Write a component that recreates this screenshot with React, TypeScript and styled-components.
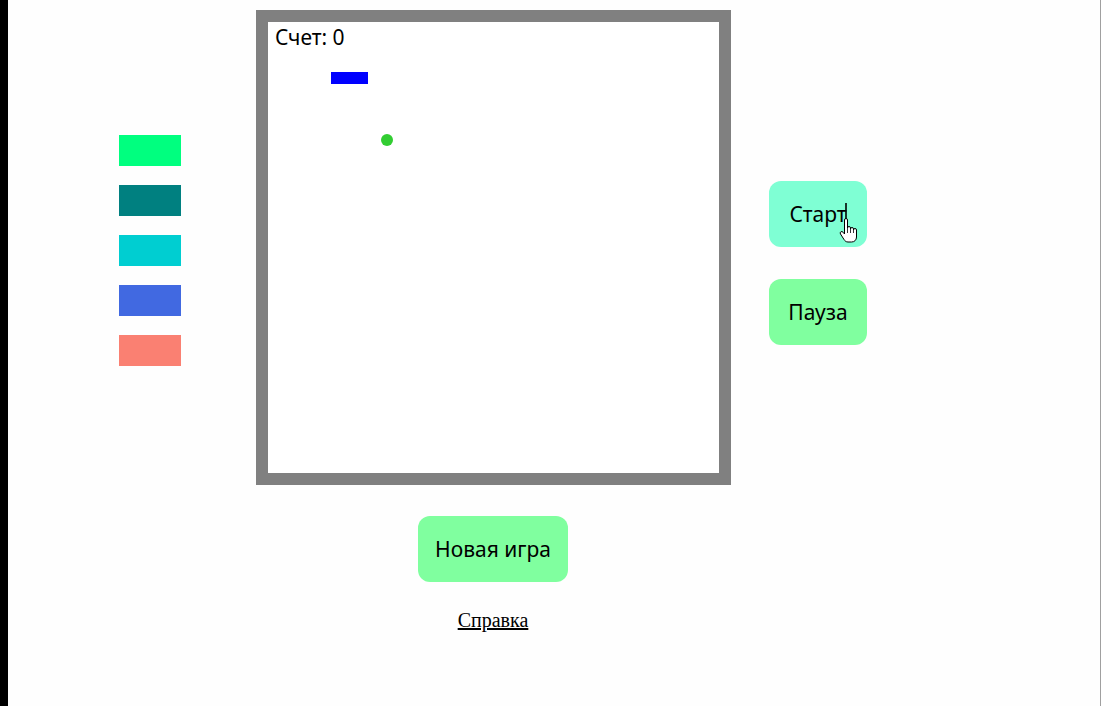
import React from "react";
import styled, { createGlobalStyle } from "styled-components";

const Global = createGlobalStyle`
  html, body { margin: 0; padding: 0; background: #fefefe; }
  body { font-family: "Liberation Serif", serif; }
`;

const Page = styled.div`
  box-sizing: border-box;
  width: 1101px;
  height: 706px;
  border-left: 8px solid #000;
  border-right: 1px solid #a0a0a0;
  background: #fefefe;
  overflow: hidden;
`;

const Main = styled.div`
  display: flex;
  flex-direction: column;
  padding: 10px 0 0 111px;
`;

const TopRow = styled.div`
  display: flex;
  align-items: flex-start;
`;

const Swatches = styled.div`
  display: flex;
  flex-direction: column;
  gap: 19px;
  padding-top: 125px;
  margin-right: 75px;
`;

const Swatch = styled.div<{ $color: string }>`
  width: 62px;
  height: 31px;
  background: ${(p) => p.$color};
`;

const Board = styled.div`
  position: relative;
  width: 451px;
  height: 451px;
  border: 12px solid #808080;
  background: #fff;
  flex: none;
`;

const Score = styled.div`
  position: absolute;
  left: 7px;
  top: 1px;
  font-family: "Comic Sans MS", "Noto Sans", sans-serif;
  font-size: 21px;
  color: #000;
`;

const Paddle = styled.div`
  position: absolute;
  left: 63px;
  top: 50px;
  width: 37px;
  height: 12px;
  background: #0000ff;
`;

const Ball = styled.div`
  position: absolute;
  left: 113px;
  top: 112px;
  width: 12px;
  height: 12px;
  border-radius: 50%;
  background: #32cd32;
`;

const Controls = styled.div`
  display: flex;
  flex-direction: column;
  gap: 32px;
  padding-top: 171px;
  margin-left: 38px;
`;

const GameButton = styled.button<{ $bg: string; $w: number }>`
  position: relative;
  box-sizing: border-box;
  width: ${(p) => p.$w}px;
  height: 66px;
  border: none;
  border-radius: 12px;
  background: ${(p) => p.$bg};
  font-family: "Comic Sans MS", "Noto Sans", sans-serif;
  font-size: 21px;
  color: #000;
  display: flex;
  align-items: center;
  justify-content: center;
  padding: 0;
  cursor: pointer;
`;

const BottomRow = styled.div`
  width: 474px;
  margin-left: 137px;
  display: flex;
  flex-direction: column;
  align-items: center;
  padding-top: 31px;
`;

const HelpLink = styled.a`
  margin-top: 27px;
  font-family: "Liberation Serif", serif;
  font-size: 20px;
  color: #000;
  text-decoration: underline;
`;

const Pointer = styled.svg`
  position: absolute;
  left: 70px;
  top: 22px;
  width: 20px;
  height: 44px;
  pointer-events: none;
`;

const HandCursor = () => (
  <Pointer viewBox="0 0 20 44">
    <line x1="7" y1="0" x2="7" y2="24" stroke="#000" strokeWidth="1.6" />
    <path
      d="M5.5 17 a1.5 1.5 0 0 1 3 0 V25 a1.5 1.5 0 0 1 3 0 V26 a1.5 1.5 0 0 1 3 0 V27 a1.5 1.5 0 0 1 3 0 V34 c0 3 -2 5 -5 5 H9 c-2 0 -3 -1 -4 -2.5 L1.5 31 a1.5 1.5 0 0 1 2.5 -1.8 L5.5 31 Z"
      fill="#fff"
      stroke="#000"
      strokeWidth="1"
      strokeLinejoin="round"
    />
    <path d="M8.5 25 V30 M11.5 26 V30 M14.5 27 V30" stroke="#000" strokeWidth="0.8" />
  </Pointer>
);

const swatchColors = ["#00ff7f", "#008080", "#00ced1", "#4169e1", "#fa8072"];

export default function App() {
  return (
    <>
      <Global />
      <Page>
        <Main>
          <TopRow>
            <Swatches>
              {swatchColors.map((c) => (
                <Swatch key={c} $color={c} />
              ))}
            </Swatches>
            <Board>
              <Score>Счет: 0</Score>
              <Paddle />
              <Ball />
            </Board>
            <Controls>
              <GameButton $bg="#7fffd4" $w={98}>
                Старт
                <HandCursor />
              </GameButton>
              <GameButton $bg="#80ff9f" $w={98}>
                Пауза
              </GameButton>
            </Controls>
          </TopRow>
          <BottomRow>
            <GameButton $bg="#80ff9f" $w={150}>
              Новая игра
            </GameButton>
            <HelpLink href="#">Справка</HelpLink>
          </BottomRow>
        </Main>
      </Page>
    </>
  );
}
